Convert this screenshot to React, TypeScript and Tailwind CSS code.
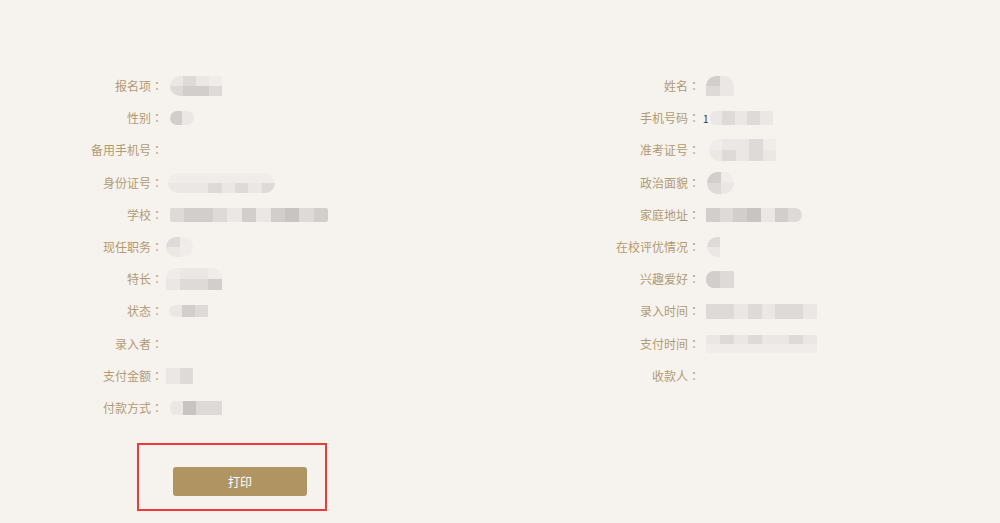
import React from "react";

type Cell = [string, string];
type Val = { w: number; h: number; cols: Cell[]; r?: string; ml?: number; pre?: string };

const Blur = ({ v }: { v: Val }) => (
  <div className="flex items-center" style={{ marginLeft: v.ml ?? 0 }}>
    {v.pre && <span className="mr-px text-[10px] text-[#333]">{v.pre}</span>}
    <div className={`flex overflow-hidden ${v.r ?? "rounded-lg"}`} style={{ width: v.w, height: v.h }}>
      {v.cols.map((c, i) => (
        <div key={i} className="flex flex-1 flex-col">
          <div className="flex-1" style={{ background: c[0] }} />
          <div className="flex-1" style={{ background: c[1] }} />
        </div>
      ))}
    </div>
  </div>
);

const A = "#ebe7e4";
const B = "#dedad7";
const C = "#d2cecb";
const D = "#c8c4c1";
const E = "#f0ece9";

type Row = { label: string; v?: Val };

const left: Row[] = [
  { label: "报名项", v: { w: 52, h: 20, cols: [[A, B], [B, C], [A, C], [E, B]], r: "rounded-l-[10px]", ml: 7 } },
  { label: "性别", v: { w: 24, h: 14, cols: [[C, C], [A, A]], r: "rounded-full", ml: 7 } },
  { label: "备用手机号" },
  { label: "身份证号", v: { w: 107, h: 20, cols: [[E, A], [E, A], [E, A], [E, B], [E, A], [E, B], [E, A], [E, B]], r: "rounded-full", ml: 5 } },
  { label: "学校", v: { w: 158, h: 14, cols: [[B, B], [C, C], [C, C], [B, B], [A, A], [C, C], [A, A], [C, C], [D, D], [B, B], [C, C]], r: "rounded-[2px]", ml: 7 } },
  { label: "现任职务", v: { w: 27, h: 20, cols: [[B, A], [E, E]], r: "rounded-full", ml: 3 } },
  { label: "特长", v: { w: 56, h: 22, cols: [[E, A], [A, B], [A, B], [E, C]], r: "rounded-t-[10px]", ml: 3 } },
  { label: "状态", v: { w: 39, h: 12, cols: [[A, A], [C, C], [B, B]], r: "rounded-l-[6px]", ml: 6 } },
  { label: "录入者" },
  { label: "支付金额", v: { w: 27, h: 16, cols: [[A, A], [B, B]], r: "rounded-[1px]", ml: 3 } },
  { label: "付款方式", v: { w: 52, h: 14, cols: [[A, A], [D, D], [B, B], [B, B]], r: "rounded-l-[5px]", ml: 7 } },
];

const right: Row[] = [
  { label: "姓名", v: { w: 28, h: 20, cols: [[C, B], [A, A]], r: "rounded-t-[10px]", ml: 6 } },
  { label: "手机号码", v: { w: 63, h: 14, cols: [[A, A], [B, B], [A, A], [B, B], [A, A]], r: "rounded-l-[6px]", ml: 3, pre: "1" } },
  { label: "准考证号", v: { w: 67, h: 22, cols: [[E, A], [A, B], [A, A], [B, B], [E, A]], r: "rounded-l-[11px]", ml: 9 } },
  { label: "政治面貌", v: { w: 27, h: 22, cols: [[C, B], [E, A]], r: "rounded-full", ml: 7 } },
  { label: "家庭地址", v: { w: 96, h: 14, cols: [[C, C], [B, B], [C, C], [D, D], [A, A], [C, C], [B, B]], r: "rounded-r-[7px]", ml: 6 } },
  { label: "在校评优情况", v: { w: 13, h: 20, cols: [[B, A]], r: "rounded-l-full", ml: 7 } },
  { label: "兴趣爱好", v: { w: 28, h: 17, cols: [[C, C], [B, B]], r: "rounded-l-[8px]", ml: 6 } },
  { label: "录入时间", v: { w: 111, h: 15, cols: [[B, B], [B, B], [A, A], [B, B], [A, A], [B, B], [B, B], [A, A]], r: "rounded-[1px]", ml: 6 } },
  { label: "支付时间", v: { w: 111, h: 18, cols: [[A, E], [B, E], [A, E], [B, E], [A, E], [A, E], [B, E], [A, E]], r: "rounded-[1px]", ml: 6 } },
  { label: "收款人" },
];

const Label = ({ text }: { text: string }) => (
  <div className="w-[163px] shrink-0 text-right font-['Noto_Sans_CJK_SC',sans-serif] text-[12px] leading-none text-[#b39a72]">
    {text}
    <span className="font-['Noto_Sans_CJK_JP',sans-serif]">：</span>
  </div>
);

const Col = ({ rows, w }: { rows: Row[]; w?: string }) => (
  <div className={`flex flex-col ${w ?? ""}`}>
    {rows.map((r) => (
      <div key={r.label} className="flex h-[32.2px] items-center">
        <Label text={r.label} />
        {r.v && <Blur v={r.v} />}
      </div>
    ))}
  </div>
);

export default function App() {
  return (
    <div className="h-[523px] w-[1000px] overflow-hidden bg-[#f6f3ef] font-['Noto_Sans_CJK_SC',sans-serif]">
      <div className="flex pt-[70px]">
        <Col rows={left} w="w-[537px]" />
        <Col rows={right} />
      </div>
      <div className="ml-[137px] mt-[19px] h-[68px] w-[190px] border-2 border-[#f03a3a] pl-[34px] pt-[22px]">
        <button className="h-[29px] w-[134px] rounded-[3px] bg-[#b09562] text-[12px] text-white">打印</button>
      </div>
    </div>
  );
}
